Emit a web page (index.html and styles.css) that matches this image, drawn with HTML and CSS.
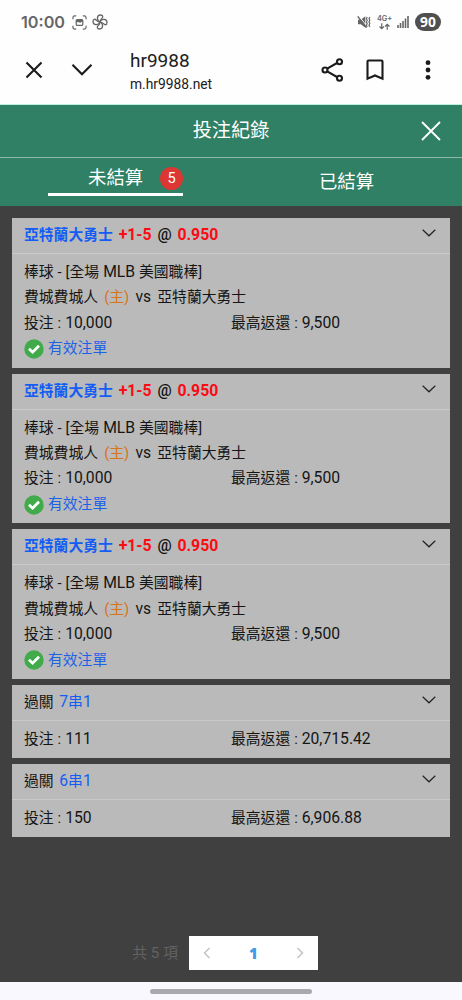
FILE: index.html
```html
<!DOCTYPE html>
<html lang="zh-Hant">
<head>
<meta charset="utf-8">
<meta name="viewport" content="width=device-width, initial-scale=1">
<title>投注紀錄</title>
<link rel="stylesheet" href="styles.css">
</head>
<body>
<svg width="0" height="0" class="defs">
  <symbol id="chev" viewBox="0 0 14 8"><path d="M.7 .8 7 6.8 13.3 .8" fill="none" stroke="#222" stroke-width="1.2"/></symbol>
  <symbol id="check" viewBox="0 0 20 20"><circle cx="10" cy="10" r="9.7" fill="#41ab4b"/><path d="M5 9.800 8.600 13.200 15 6.800" fill="none" stroke="#fff" stroke-width="2.700"/></symbol>
</svg>
<header class="browser">
  <div class="status">
    <span class="clock">10:00</span>
    <svg class="s-shot" viewBox="0 0 16 16" fill="none" stroke="#666" stroke-width="1.300"><path d="M1 4.500V3a2 2 0 0 1 2-2h1.500M11.500 1H13a2 2 0 0 1 2 2v1.500M15 11.500V13a2 2 0 0 1-2 2h-1.500M4.500 15H3a2 2 0 0 1-2-2v-1.500"/><rect x="4.500" y="5" width="7" height="6" rx="1"/><path d="M4.500 8V6a1 1 0 0 1 1-1h5a1 1 0 0 1 1 1v1l-3 1.200-2-.7z" fill="#666" stroke="none"/></svg>
    <svg class="s-fan" viewBox="0 0 16 16" fill="none" stroke="#666" stroke-width="1.300"><path d="M8 8C4.500 6.500 4.500 1 8.500 1c3 0 2.500 2.500 1.200 3.500S8.500 6.500 8 8Z"/><path d="M8 8c1.500-3.500 7-3.500 7 .5 0 3-2.500 2.500-3.500 1.200S9.500 8.500 8 8Z"/><path d="M8 8c3.500 1.500 3.500 7-.5 7-3 0-2.500-2.500-1.200-3.500S7.500 9.500 8 8Z"/><path d="M8 8c-1.500 3.500-7 3.500-7-.5 0-3 2.500-2.500 3.500-1.200S6.500 7.500 8 8Z"/></svg>
    <span class="grow"></span>
    <svg class="s-mute" viewBox="0 0 14 14"><path d="M1 4.800h2.800L8.300 1.300v11.400L3.800 9.200H1z" fill="#666"/><path d="M2 1.200 10 11.200" stroke="#fff" stroke-width="1"/><path d="M.7 1.400 9.500 12.600" stroke="#666" stroke-width="1.500"/><path d="M10.200 2l-.8 1.700.8 1.600-.8 1.700.8 1.600-.8 1.700.8 1.700M12.800 2l-.8 1.700.8 1.600-.8 1.700.8 1.600-.8 1.700.8 1.700" fill="none" stroke="#666" stroke-width="1.200"/></svg>
    <span class="net"><b>4G+</b><svg viewBox="0 0 10 6" fill="none" stroke="#666" stroke-width="1.100"><path d="M2.500 0v5M.5 3l2 2 2-2M7.500 6V1M5.500 3l2-2 2 2"/></svg></span>
    <svg class="s-sig" viewBox="0 0 12 12" fill="#666"><path d="M.2 9h1.600v3H.200zM2.700 7h1.600v5H2.700zM5.200 5h1.600v7H5.200zM7.700 2.500h1.600V12H7.700zM10.200 0h1.600v12h-1.600z"/></svg>
    <span class="battery">90</span>
  </div>
  <div class="bar">
    <svg class="b-x" viewBox="0 0 18 18"><path d="M1.500 1.500l15 15M16.500 1.500l-15 15"/></svg>
    <svg class="b-down" viewBox="0 0 22 14"><path d="M1.500 1.800 11 11.300 20.500 1.800"/></svg>
    <div class="site"><div class="name">hr9988</div><div class="host">m.hr9988.net</div></div>
    <svg class="b-share" viewBox="0 0 24 26"><path d="M6.200 11.600 16 6M6.200 14.400 16 20"/><circle cx="4" cy="13" r="2.500"/><circle cx="18.500" cy="4.700" r="2.500"/><circle cx="18.500" cy="21.300" r="2.500"/></svg>
    <svg class="b-mark" viewBox="0 0 18 22"><path d="M1.500 19.700V2.500a1 1 0 0 1 1-1h13a1 1 0 0 1 1 1v17.200L9 16.500z"/></svg>
    <svg class="b-dots" viewBox="0 0 6 20"><circle cx="3" cy="2.700" r="2.400"/><circle cx="3" cy="10" r="2.400"/><circle cx="3" cy="17.300" r="2.400"/></svg>
  </div>
</header>
<div class="title"><h1>投注紀錄</h1><svg class="t-close" viewBox="0 0 20 20"><path d="M1 1l18 18M19 1 1 19" stroke="#fff" stroke-width="1.800"/></svg></div>
<nav class="tabs">
  <div class="tab active"><div class="tab-in"><span>未結算</span><i class="badge">5</i></div></div>
  <div class="tab">已結算</div>
</nav>
<main class="list">
  <section class="card">
    <div class="head"><b><span class="blue">亞特蘭大勇士</span> <span class="red">+1-5</span> <span class="at">@</span> <span class="red">0.950</span></b><svg class="chev"><use href="#chev"/></svg></div>
    <div class="body">
      <div class="row">棒球 - [全場 <span class="num">MLB</span> 美國職棒]</div>
      <div class="row teams"><span>費城費城人</span><span class="home">(主)</span><span class="num">vs</span><span>亞特蘭大勇士</span></div>
      <div class="row split"><span>投注 : <span class="num">10,000</span></span><span>最高返還 : <span class="num">9,500</span></span></div>
      <div class="row valid"><svg class="check"><use href="#check"/></svg>有效注單</div>
    </div>
  </section>
  <section class="card">
    <div class="head"><b><span class="blue">亞特蘭大勇士</span> <span class="red">+1-5</span> <span class="at">@</span> <span class="red">0.950</span></b><svg class="chev"><use href="#chev"/></svg></div>
    <div class="body">
      <div class="row">棒球 - [全場 <span class="num">MLB</span> 美國職棒]</div>
      <div class="row teams"><span>費城費城人</span><span class="home">(主)</span><span class="num">vs</span><span>亞特蘭大勇士</span></div>
      <div class="row split"><span>投注 : <span class="num">10,000</span></span><span>最高返還 : <span class="num">9,500</span></span></div>
      <div class="row valid"><svg class="check"><use href="#check"/></svg>有效注單</div>
    </div>
  </section>
  <section class="card">
    <div class="head"><b><span class="blue">亞特蘭大勇士</span> <span class="red">+1-5</span> <span class="at">@</span> <span class="red">0.950</span></b><svg class="chev"><use href="#chev"/></svg></div>
    <div class="body">
      <div class="row">棒球 - [全場 <span class="num">MLB</span> 美國職棒]</div>
      <div class="row teams"><span>費城費城人</span><span class="home">(主)</span><span class="num">vs</span><span>亞特蘭大勇士</span></div>
      <div class="row split"><span>投注 : <span class="num">10,000</span></span><span>最高返還 : <span class="num">9,500</span></span></div>
      <div class="row valid"><svg class="check"><use href="#check"/></svg>有效注單</div>
    </div>
  </section>
  <section class="card combo">
    <div class="head"><span class="parlay">過關 <span class="blue"><span class="num">7</span>串<span class="num">1</span></span></span><svg class="chev"><use href="#chev"/></svg></div>
    <div class="body"><div class="row split"><span>投注 : <span class="num">111</span></span><span>最高返還 : <span class="num">20,715.42</span></span></div></div>
  </section>
  <section class="card combo">
    <div class="head"><span class="parlay">過關 <span class="blue"><span class="num">6</span>串<span class="num">1</span></span></span><svg class="chev"><use href="#chev"/></svg></div>
    <div class="body"><div class="row split"><span>投注 : <span class="num">150</span></span><span>最高返還 : <span class="num">6,906.88</span></span></div></div>
  </section>
</main>
<footer class="pager">
  <span class="total">共 5 項</span>
  <div class="pages"><svg viewBox="0 0 8 12"><path d="M6.500 1 1.500 6l5 5"/></svg><b>1</b><svg viewBox="0 0 8 12"><path d="M1.500 1l5 5-5 5"/></svg></div>
</footer>
<div class="gesture"><div class="pill"></div></div>
</body>
</html>
```
FILE: styles.css
```css
* { box-sizing: border-box; }
body {
  margin: 0;
  height: 1000px;
  display: flex;
  flex-direction: column;
  overflow: hidden;
  background: #404040;
  font-family: Roboto, "Noto Sans CJK TC", sans-serif;
  font-size: 14.8px;
  color: #151515;
}
svg { display: block; flex: none; }
.defs { position: absolute; }
.grow { flex: 1; }

.browser { height: 105px; flex: none; background: #fefefe; border-bottom: 1px solid #bdf0dc; }
.status { height: 44px; display: flex; align-items: center; padding: 0 21px 0 21px; }
.clock { font: 600 16.2px/20px Inter, sans-serif; color: #666; width: 44px; white-space: nowrap; }
.s-shot { width: 15px; height: 15px; margin-left: 7px; }
.s-fan { width: 16px; height: 16px; margin-left: 5px; }
.s-mute { width: 14px; height: 14px; }
.net { width: 15px; margin: 0 5px 0 6px; display: flex; flex-direction: column; align-items: center; color: #666; }
.net b { font: 600 7.300px/8px Inter, sans-serif; }
.net svg { width: 11px; height: 7px; }
.s-sig { width: 12px; height: 12px; margin-right: 6px; }
.battery { width: 26px; height: 18px; border-radius: 9px; background: #505050; color: #fff; font: 700 13.800px/18px "Open Sans", sans-serif; text-align: center; }

.bar { height: 52px; display: flex; align-items: center; padding-left: 25px; }
.bar svg { fill: none; stroke: #1b1b1b; stroke-width: 2.100; }
.b-x { width: 18px; height: 18px; }
.b-down { width: 22px; height: 14px; margin-left: 28px; }
.site { width: 191px; margin-left: 37px; padding-top: 3px; color: #202020; }
.name { font: 400 19px/25px Roboto, sans-serif; }
.host { font: 400 13.800px/23px Roboto, sans-serif; }
.b-share { width: 24px; height: 26px; }
.b-mark { width: 18px; height: 22px; margin-left: 21px; }
.bar .b-dots { width: 6px; height: 20px; margin-left: 41px; fill: #1b1b1b; stroke: none; }

.title { height: 53px; flex: none; display: flex; align-items: center; padding-right: 21px; background: #308065; border-bottom: 1px solid #8fbaab; }
.title h1 { flex: 1; margin: 0; padding-left: 41px; text-align: center; font-size: 19.200px; line-height: 24px; font-weight: 400; color: #fff; }
.t-close { width: 20px; height: 20px; }
.tabs { height: 48px; flex: none; display: flex; background: #308065; color: #fff; font-size: 18.400px; }
.tab { flex: 1; display: flex; justify-content: center; line-height: 47px; }
.tab-in { width: 135px; height: 38px; display: flex; align-items: center; padding-left: 40px; line-height: 36px; border-bottom: 3px solid #fff; white-space: nowrap; }
.tab-in span { padding-top: 4px; }
.badge { width: 23px; height: 23px; flex: none; margin: 5px 0 0 auto; border-radius: 50%; background: #dc3733; font: 400 14.500px/23px Roboto, sans-serif; text-align: center; }

.list { padding: 12px 12px 0; display: flex; flex-direction: column; gap: 6px; }
.card { background: #bababa; height: 149.700px; }
.head { height: 36px; padding: 0 14px 0 12px; display: flex; justify-content: space-between; border-bottom: 1px solid #cacaca; line-height: 35px; white-space: pre; }
.head b { font-size: 15.800px; line-height: 34.500px; font-weight: 700; word-spacing: 1.900px; }
.head b .blue { font-size: 14.800px; }
.at { font-weight: 500; color: #111; }
.blue { color: #135df5; }
.red { color: #fb0b12; }
.num { font-size: 15.700px; line-height: 1; }
.chev { width: 14px; height: 8px; margin-top: 11px; }
.body { padding: 6px 12px 0; }
.row { height: 25.400px; line-height: 25.400px; white-space: nowrap; word-spacing: .3px; }
.teams { display: flex; align-items: baseline; gap: 6.200px; }
.home { color: #d9731c; }
.split { display: grid; grid-template-columns: 207px 1fr; }
.valid { display: flex; align-items: center; gap: 4px; color: #1c62e8; height: 25.500px; line-height: 25.500px; }
.check { width: 20px; height: 20px; }
.combo { height: 72.800px; }
.combo .parlay { word-spacing: 2px; }

.pager { margin-top: auto; height: 46px; padding: 0 144px 12px 0; display: flex; align-items: center; justify-content: flex-end; }
.total { color: #626262; font-size: 15px; line-height: 30px; margin-right: 11px; }
.pages { width: 129px; height: 34px; padding: 0 14px; display: flex; align-items: center; justify-content: space-between; background: #fff; color: #409ce8; font: 700 15px/32px "Open Sans", sans-serif; }
.pages svg { width: 8px; height: 12px; fill: none; stroke: #c0c4cc; stroke-width: 1.500; }
.gesture { height: 18px; flex: none; display: flex; justify-content: center; padding-top: 7px; background: #f9f8ff; }
.pill { width: 162px; height: 4.500px; border-radius: 3px; background: #aaa9ae; }
```
